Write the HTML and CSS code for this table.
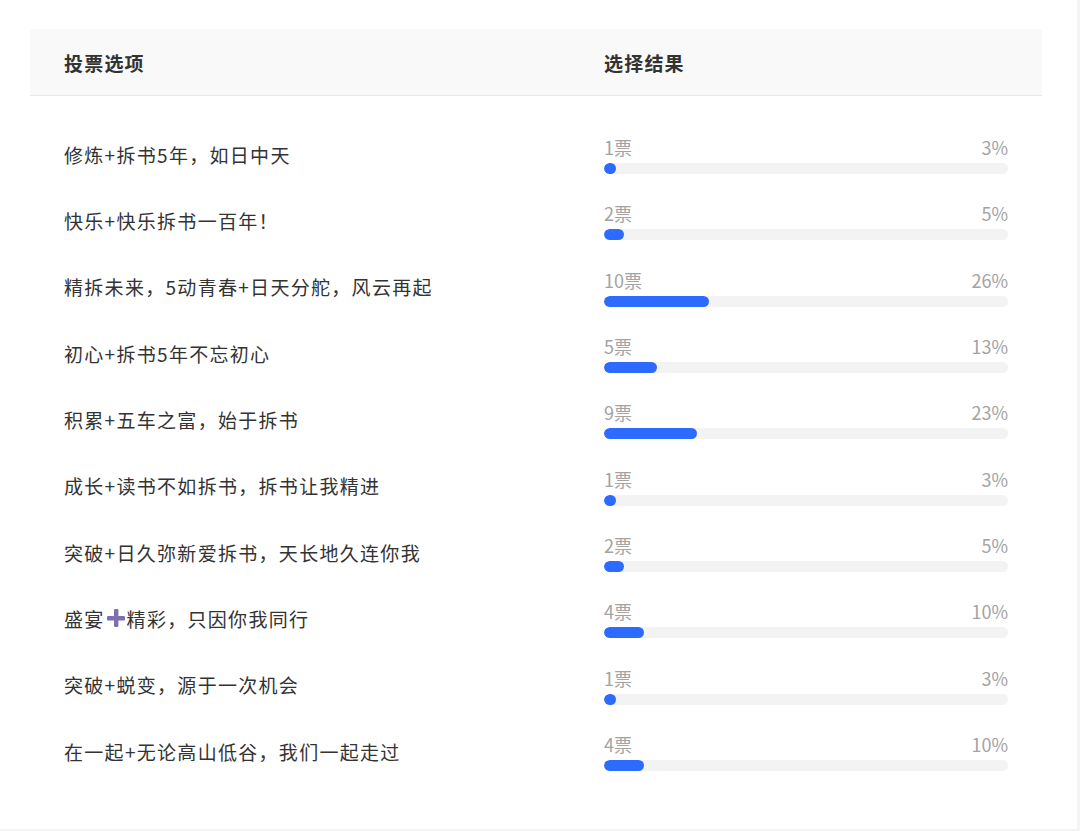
FILE: index.html
```html
<!DOCTYPE html>
<html lang="zh">
<head>
<meta charset="utf-8">
<link rel="stylesheet" href="styles.css">
</head>
<body>
<div class="panel">
  <div class="table">
    <div class="head">
      <div class="col-opt">投票选项</div>
      <div class="col-res">选择结果</div>
    </div>
    <div class="rows">
      <div class="row"><div class="col-opt">修炼+拆书5年，如日中天</div><div class="col-res"><div class="meta"><span>1票</span><span>3%</span></div><div class="track"><div class="fill" style="width:3%"></div></div></div></div>
      <div class="row"><div class="col-opt">快乐+快乐拆书一百年！</div><div class="col-res"><div class="meta"><span>2票</span><span>5%</span></div><div class="track"><div class="fill" style="width:5%"></div></div></div></div>
      <div class="row"><div class="col-opt">精拆未来，5动青春+日天分舵，风云再起</div><div class="col-res"><div class="meta"><span>10票</span><span>26%</span></div><div class="track"><div class="fill" style="width:26%"></div></div></div></div>
      <div class="row"><div class="col-opt">初心+拆书5年不忘初心</div><div class="col-res"><div class="meta"><span>5票</span><span>13%</span></div><div class="track"><div class="fill" style="width:13%"></div></div></div></div>
      <div class="row"><div class="col-opt">积累+五车之富，始于拆书</div><div class="col-res"><div class="meta"><span>9票</span><span>23%</span></div><div class="track"><div class="fill" style="width:23%"></div></div></div></div>
      <div class="row"><div class="col-opt">成长+读书不如拆书，拆书让我精进</div><div class="col-res"><div class="meta"><span>1票</span><span>3%</span></div><div class="track"><div class="fill" style="width:3%"></div></div></div></div>
      <div class="row"><div class="col-opt">突破+日久弥新爱拆书，天长地久连你我</div><div class="col-res"><div class="meta"><span>2票</span><span>5%</span></div><div class="track"><div class="fill" style="width:5%"></div></div></div></div>
      <div class="row"><div class="col-opt">盛宴<svg class="plus" viewBox="0 0 20 20" width="20" height="20"><rect x="8" y="1" width="4.4" height="18" rx="1.2"/><rect x="1" y="8" width="18" height="4.4" rx="1.2"/></svg>精彩，只因你我同行</div><div class="col-res"><div class="meta"><span>4票</span><span>10%</span></div><div class="track"><div class="fill" style="width:10%"></div></div></div></div>
      <div class="row"><div class="col-opt">突破+蜕变，源于一次机会</div><div class="col-res"><div class="meta"><span>1票</span><span>3%</span></div><div class="track"><div class="fill" style="width:3%"></div></div></div></div>
      <div class="row"><div class="col-opt">在一起+无论高山低谷，我们一起走过</div><div class="col-res"><div class="meta"><span>4票</span><span>10%</span></div><div class="track"><div class="fill" style="width:10%"></div></div></div></div>
    </div>
  </div>
</div>
</body>
</html>
```
FILE: styles.css
```css
html, body {
  margin: 0;
  padding: 0;
  background: #f4f4f4;
}
body {
  font-family: "Noto Sans CJK SC", "Noto Sans", sans-serif;
  color: #333;
  width: 1080px;
  height: 831px;
  overflow: hidden;
}
.panel {
  width: 1077px;
  height: 829px;
  background: #fff;
  box-sizing: border-box;
  padding: 29px 35px 0 30px;
}
.table {
  width: 1012px;
}
.head {
  display: flex;
  align-items: center;
  height: 66px;
  background: #f9f9f9;
  border-bottom: 1px solid #e8e8e8;
  padding: 0 34px;
  font-size: 19px;
  font-weight: 700;
  color: #333;
  letter-spacing: 1.2px;
}
.col-opt {
  width: 540px;
  flex: none;
  display: flex;
  align-items: center;
}
.col-res {
  width: 404px;
  flex: none;
}
.rows {
  padding-top: 27px;
}
.row {
  display: flex;
  align-items: center;
  height: 66.33px;
  padding: 0 34px;
  font-size: 19px;
  letter-spacing: 1.3px;
  color: #333;
}
.row .col-opt {
  padding-bottom: 4px;
}
.plus {
  fill: #7f6fae;
  margin: 0 1px;
}
.meta {
  display: flex;
  justify-content: space-between;
  font-size: 18px;
  line-height: 18px;
  letter-spacing: 0;
  color: #a3a3a3;
}
.track {
  margin-top: 7px;
  height: 11px;
  border-radius: 6px;
  background: #f3f3f3;
  overflow: hidden;
}
.fill {
  height: 100%;
  min-width: 11px;
  border-radius: 6px;
  background: #2d6bff;
}
```
